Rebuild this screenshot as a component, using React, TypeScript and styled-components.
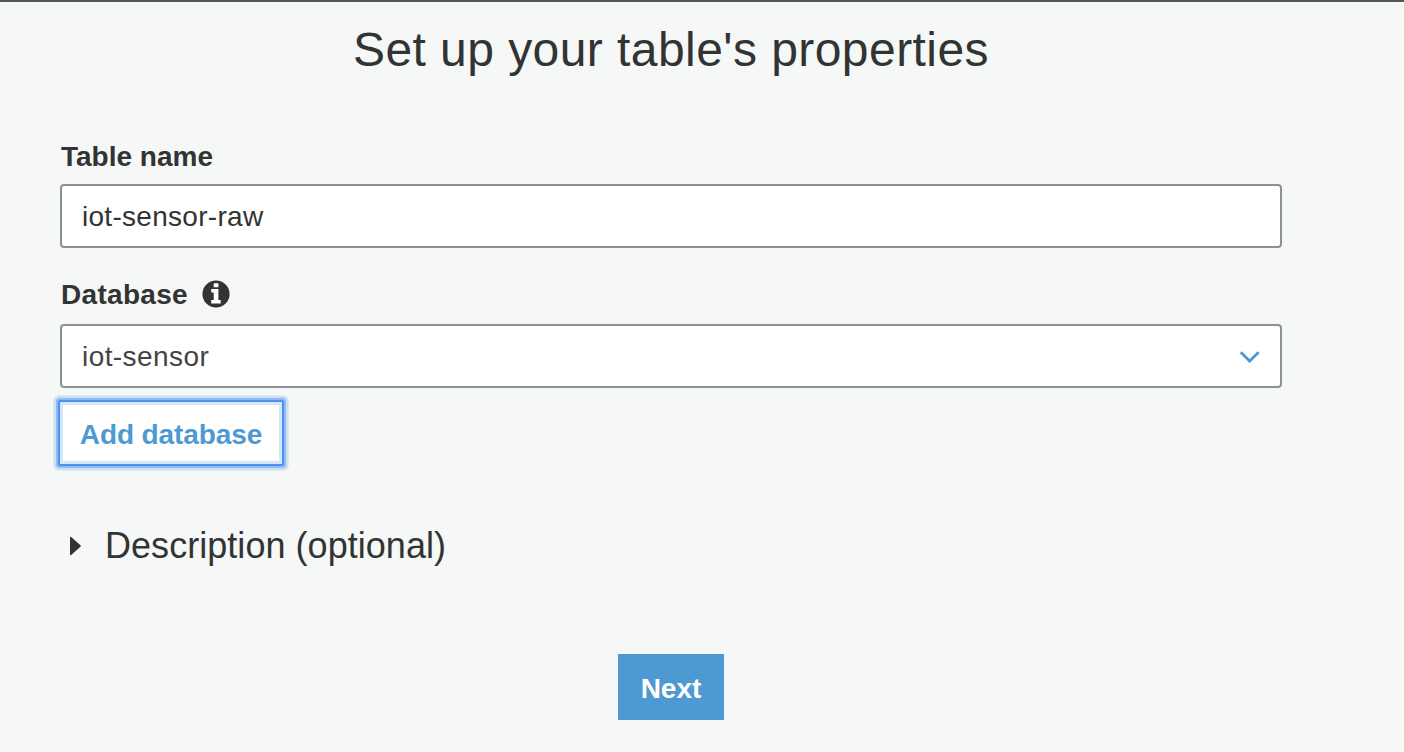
import React from "react";
import styled, { createGlobalStyle } from "styled-components";

const GlobalStyle = createGlobalStyle`
  * { box-sizing: border-box; }
  body {
    margin: 0;
    background: #f5f8f7;
    color: #313433;
    font-family: "Liberation Sans", Arial, sans-serif;
  }
`;

const Page = styled.main`
  height: 752px;
  border-top: 2px solid #525958;
  padding: 18px 122px 0 60px;
  display: flex;
  flex-direction: column;
  overflow: hidden;
`;

const Title = styled.h1`
  margin: 0;
  height: 60px;
  line-height: 60px;
  font-size: 48px;
  font-weight: 400;
  text-align: center;
  white-space: nowrap;
`;

const Field = styled.section<{ $gap: number }>`
  margin-top: ${(p) => p.$gap}px;
  display: flex;
  flex-direction: column;
`;

const Label = styled.label<{ $space: number }>`
  display: flex;
  align-items: center;
  gap: 14px;
  height: 36px;
  margin-bottom: ${(p) => p.$space}px;
  padding-left: 1px;
  font-size: 28px;
  font-weight: 700;
`;

const Control = styled.div<{ $color: string }>`
  display: flex;
  align-items: center;
  justify-content: space-between;
  height: 64px;
  padding: 2px 20px 0;
  border: 2px solid #8c9192;
  border-radius: 4px;
  background: #fff;
  color: ${(p) => p.$color};
  font-size: 28px;
`;

const Button = styled.button<{ $primary?: boolean }>`
  display: block;
  height: 66px;
  padding: 3px 0 0;
  border: 0;
  font: 700 28px "Liberation Sans", Arial, sans-serif;
  white-space: nowrap;
  color: ${(p) => (p.$primary ? "#fff" : "#4f99d3")};
  background: ${(p) => (p.$primary ? "#4f99d3" : "#fff")};
`;

const AddButton = styled(Button)`
  width: 226px;
  margin: 12px 0 0 -2px;
  border: 2px solid #4b94e9;
  border-radius: 2px;
  box-shadow: 0 0 0 2px #8fbcf5, 0 0 0 4.6px #cfdff3, inset 0 0 0 3px #d5e5fa;
`;

const NextButton = styled(Button)`
  width: 106px;
  margin: 84px auto 0;
`;

const Disclosure = styled.div`
  display: flex;
  align-items: center;
  gap: 24px;
  height: 48px;
  margin-top: 56px;
  padding-left: 10px;
  font-size: 36px;
`;

const Text = styled.span<{ $tracking?: number }>`
  letter-spacing: ${(p) => p.$tracking ?? 0}px;
  white-space: nowrap;
`;

const LabelText = styled(Text)`
  padding-top: 2px;
`;

export default function App() {
  return (
    <>
      <GlobalStyle />
      <Page>
        <Title><Text $tracking={0.44}>Set up your table's properties</Text></Title>
        <Field $gap={58}>
          <Label $space={10}><LabelText>Table name</LabelText></Label>
          <Control $color="#313433"><Text $tracking={0.29}>iot-sensor-raw</Text></Control>
        </Field>
        <Field $gap={28}>
          <Label $space={12}>
            <LabelText $tracking={0.3}>Database</LabelText>
            <svg width="28" height="28" viewBox="0 0 28 28">
              <circle cx="14" cy="14" r="13.6" fill="#313433" />
              <path d="M11.7 3.2h4.7v4.1h-4.7zM9.2 9.1h7.2v10.8h2.3v3.5H9.2v-3.5h2.5v-7.3H9.2z" fill="#fff" />
            </svg>
          </Label>
          <Control $color="#444">
            <Text $tracking={0.42}>iot-sensor</Text>
            <svg width="20" height="12" viewBox="0 0 20 12" fill="none" stroke="#4f99d3" strokeWidth="2.9">
              <path d="M.8 1.2 9.7 10 18.6 1.2" />
            </svg>
          </Control>
        </Field>
        <AddButton><Text $tracking={-0.1}>Add database</Text></AddButton>
        <Disclosure>
          <svg width="11" height="20" viewBox="0 0 11 20" fill="#313433">
            <path d="M0 1.5Q0 .2 1.2 1L10.5 9.3Q11 10 10.5 10.7L1.2 19Q0 19.8 0 18.5Z" />
          </svg>
          <Text $tracking={0.04}>Description (optional)</Text>
        </Disclosure>
        <NextButton $primary><Text>Next</Text></NextButton>
      </Page>
    </>
  );
}
